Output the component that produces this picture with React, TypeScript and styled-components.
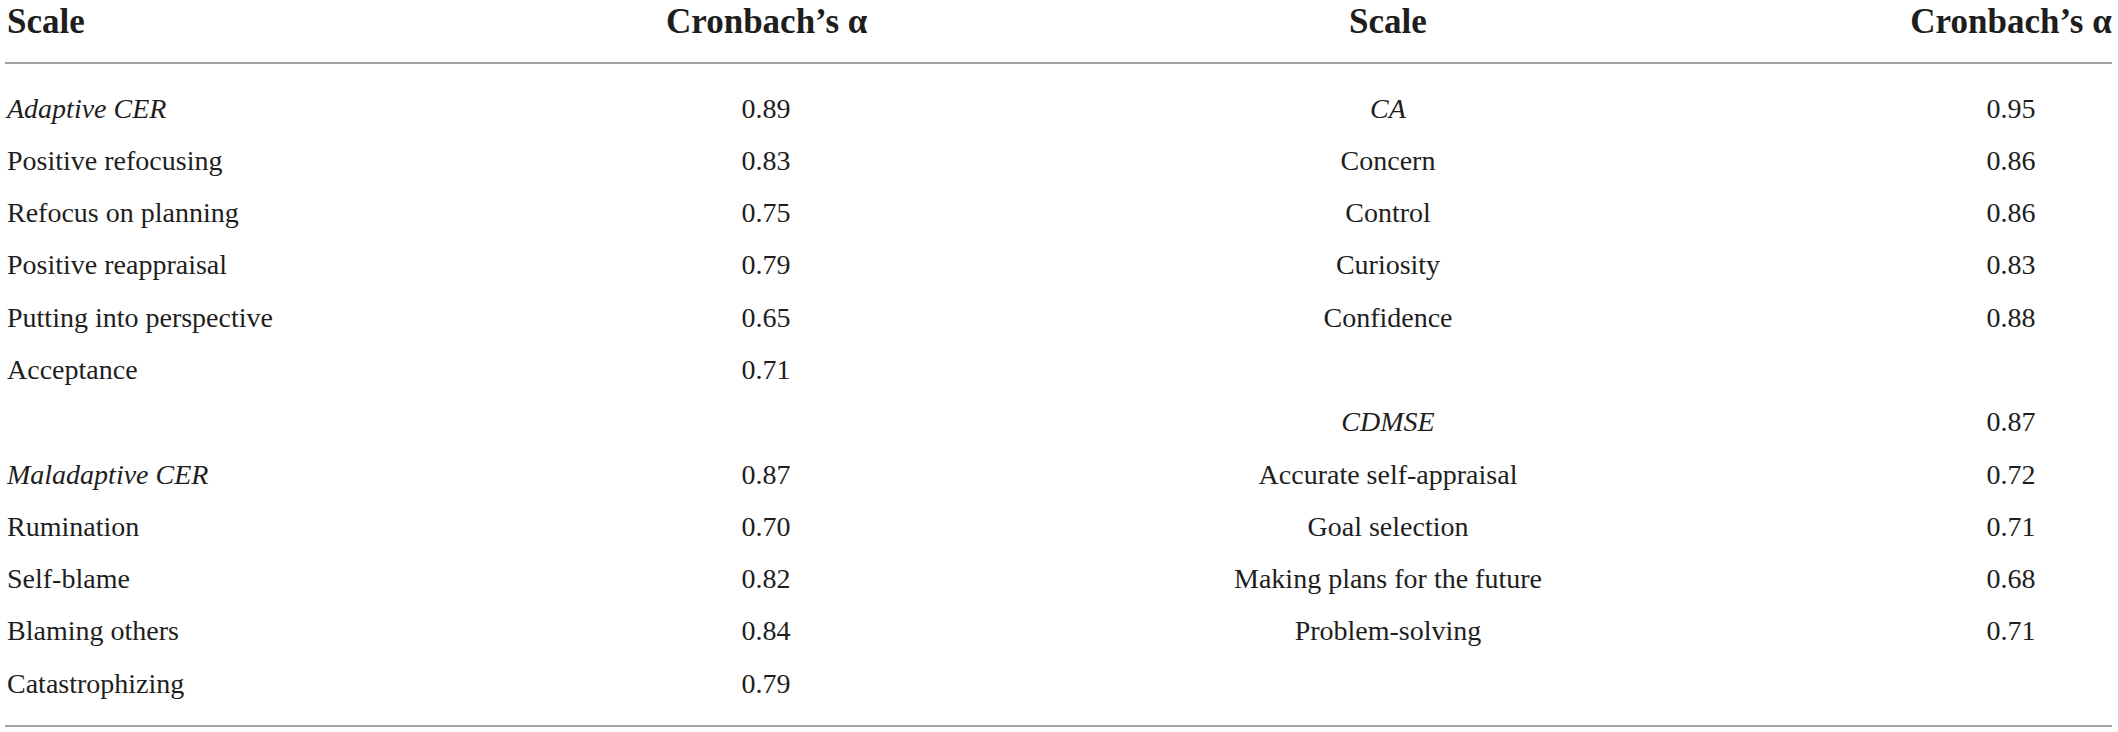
import React from "react";
import styled, { createGlobalStyle } from "styled-components";

const Global = createGlobalStyle`
  html, body { margin: 0; padding: 0; background: #ffffff; }
  body { font-family: "Liberation Serif", "Times New Roman", serif; color: #1e1e1e; }
`;

const Table = styled.div`
  margin-left: 5px;
  width: 2107px;
  display: grid;
  grid-template-columns: 661px 200px 1044px 202px;
`;

const HeadCell = styled.div<{ $align: "left" | "center" }>`
  font-weight: bold;
  font-size: 35px;
  line-height: 39px;
  height: 64px;
  padding-top: 2px;
  padding-left: ${(p) => (p.$align === "left" ? "2px" : "0")};
  text-align: ${(p) => p.$align};
  white-space: nowrap;
  border-bottom: 2px solid #a3a3a3;
  box-sizing: border-box;
`;

const Body = styled.div`
  grid-column: 1 / -1;
  display: grid;
  grid-template-columns: 661px 200px 1044px 202px;
  padding: 18.5px 0 15px;
  border-bottom: 2px solid #a3a3a3;
`;

const Cell = styled.div<{ $align: "left" | "center"; $italic?: boolean }>`
  font-size: 28px;
  line-height: 52.3px;
  height: 52.3px;
  padding-left: ${(p) => (p.$align === "left" ? "2px" : "0")};
  text-align: ${(p) => p.$align};
  font-style: ${(p) => (p.$italic ? "italic" : "normal")};
  white-space: nowrap;
`;

type R = { l: string; la: string; li?: boolean; r: string; ra: string; ri?: boolean };

const rows: R[] = [
  { l: "Adaptive CER", la: "0.89", li: true, r: "CA", ra: "0.95", ri: true },
  { l: "Positive refocusing", la: "0.83", r: "Concern", ra: "0.86" },
  { l: "Refocus on planning", la: "0.75", r: "Control", ra: "0.86" },
  { l: "Positive reappraisal", la: "0.79", r: "Curiosity", ra: "0.83" },
  { l: "Putting into perspective", la: "0.65", r: "Confidence", ra: "0.88" },
  { l: "Acceptance", la: "0.71", r: "", ra: "" },
  { l: "", la: "", r: "CDMSE", ra: "0.87", ri: true },
  { l: "Maladaptive CER", la: "0.87", li: true, r: "Accurate self-appraisal", ra: "0.72" },
  { l: "Rumination", la: "0.70", r: "Goal selection", ra: "0.71" },
  { l: "Self-blame", la: "0.82", r: "Making plans for the future", ra: "0.68" },
  { l: "Blaming others", la: "0.84", r: "Problem-solving", ra: "0.71" },
  { l: "Catastrophizing", la: "0.79", r: "", ra: "" },
];

export default function App() {
  return (
    <>
      <Global />
      <Table>
        <HeadCell $align="left">Scale</HeadCell>
        <HeadCell $align="center">Cronbach’s α</HeadCell>
        <HeadCell $align="center">Scale</HeadCell>
        <HeadCell $align="center">Cronbach’s α</HeadCell>
        <Body>
          {rows.map((row, i) => (
            <React.Fragment key={i}>
              <Cell $align="left" $italic={row.li}>{row.l}</Cell>
              <Cell $align="center">{row.la}</Cell>
              <Cell $align="center" $italic={row.ri}>{row.r}</Cell>
              <Cell $align="center">{row.ra}</Cell>
            </React.Fragment>
          ))}
        </Body>
      </Table>
    </>
  );
}
